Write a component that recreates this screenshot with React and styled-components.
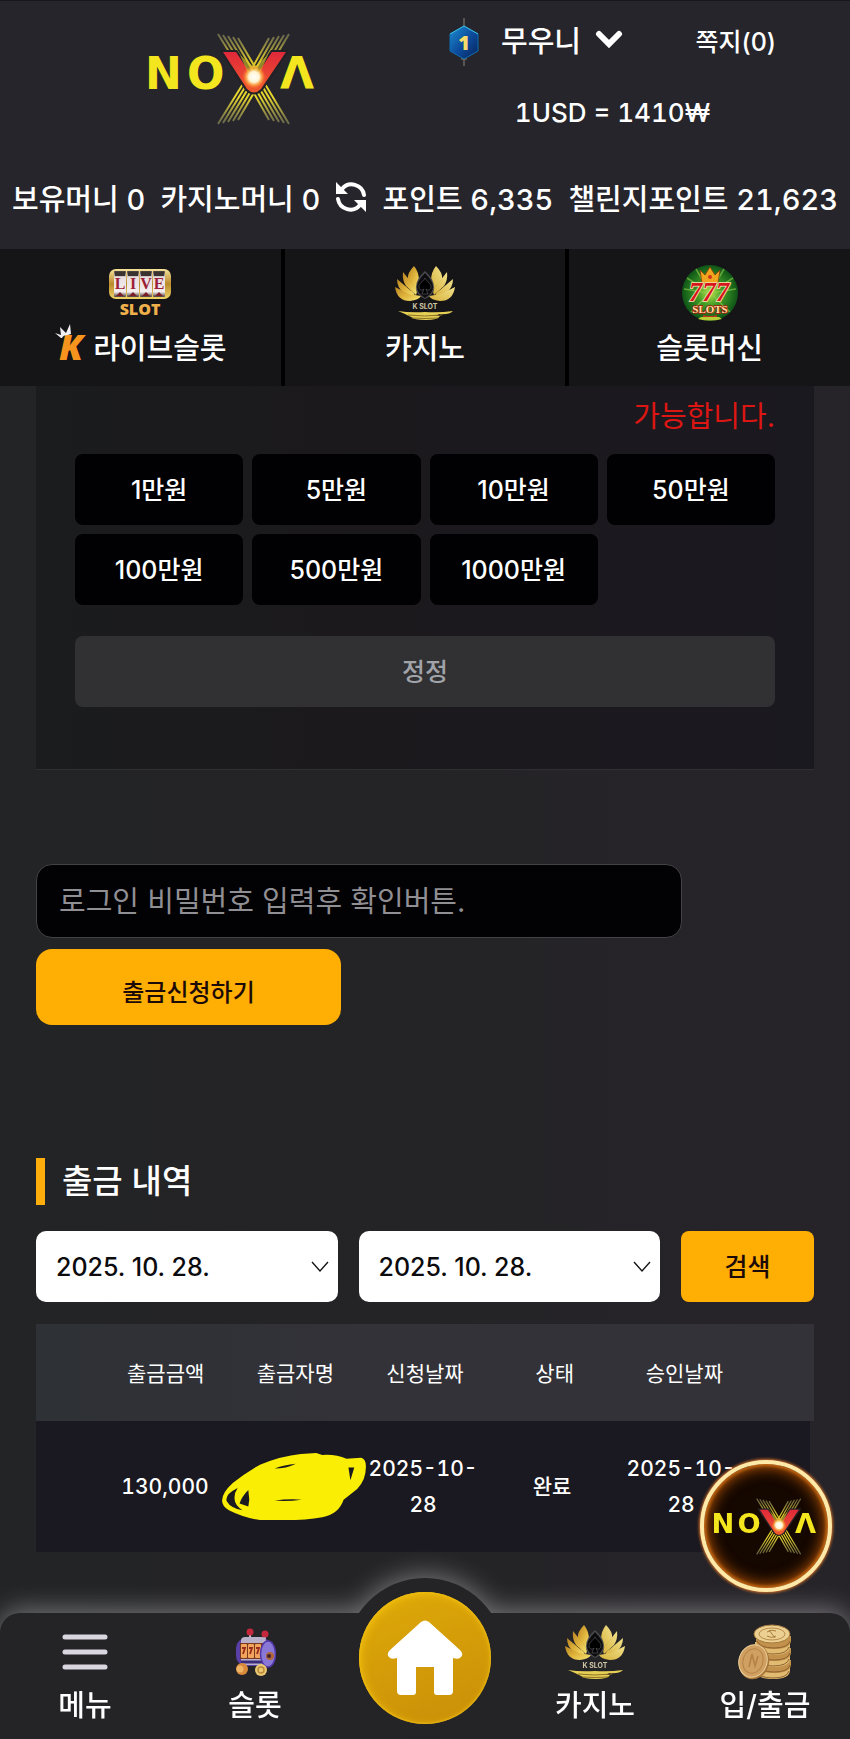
import React,{useState} from 'react'
import styled,{createGlobalStyle} from 'styled-components'

const amounts = ['1만원','5만원','10만원','50만원','100만원','500만원','1000만원']

function Logo({ className }) {
  const beams = [0,1,2,3,4]
  return (
    <svg className={className} viewBox="-8 0 186 92" role="img" aria-label="NOVA">
      <defs>
        <radialGradient id="flare">
          <stop offset="0" stopColor="#fff" />
          <stop offset="0.45" stopColor="#fff3cf" />
          <stop offset="0.7" stopColor="#ffb545" stopOpacity="0.7" />
          <stop offset="1" stopColor="#ff6a2a" stopOpacity="0" />
        </radialGradient>
        <linearGradient id="beam" x1="0" y1="0" x2="0" y2="92" gradientUnits="userSpaceOnUse">
          <stop offset="0" stopColor="#8d8d62" stopOpacity="0.6" />
          <stop offset="0.3" stopColor="#d8c62a" />
          <stop offset="0.7" stopColor="#e6d62c" />
          <stop offset="1" stopColor="#8d8d62" stopOpacity="0.6" />
        </linearGradient>
        <linearGradient id="redV" x1="0" y1="0" x2="0" y2="1">
          <stop offset="0" stopColor="#e0283a" />
          <stop offset="1" stopColor="#ee5a2c" />
        </linearGradient>
      </defs>
      <g fill="#f4e61e" fontFamily="DejaVu Sans" fontWeight="700" fontSize="44">
        <text x="-3" y="56">N</text>
        <text x="39" y="56">O</text>
        <text x="132" y="56">Λ</text>
      </g>
      <g stroke="url(#beam)" strokeWidth="2" fill="none">
        {beams.map((i) => (
          <g key={i}>
            <path d={`M${70 + i * 5} ${1 + i}L${98 + i * 4} 46L${121 + i * 5} ${87 + i}`} />
            <path d={`M${141 - i * 5} ${1 + i}L${114 - i * 4} 46L${90 - i * 5} ${87 + i}`} />
          </g>
        ))}
      </g>
      <path d="M71 17h18l17 25 17-25h19l-27 40q-9 9-18 0z" fill="#222126" />
      <path d="M75 19h13l18 27 18-27h14l-25 37q-7 7-14 0z" fill="url(#redV)" />
      <path d="M92 22l14 12 14-12-9 20h-10z" fill="#d9c52b" opacity="0.6" />
      <circle cx="106" cy="44" r="12" fill="url(#flare)" />
    </svg>
  )
}

function Lotus() {
  return (
    <svg width="62" height="56" viewBox="0 0 62 56" aria-hidden="true">
      <defs>
        <linearGradient id="petal" x1="0" y1="0" x2="1" y2="1">
          <stop offset="0" stopColor="#b98422" />
          <stop offset="0.5" stopColor="#e0b43c" />
          <stop offset="1" stopColor="#f5e676" />
        </linearGradient>
        <linearGradient id="petalR" x1="1" y1="0" x2="0" y2="1">
          <stop offset="0" stopColor="#f0e08a" />
          <stop offset="1" stopColor="#d8b23c" />
        </linearGradient>
      </defs>
      <g fill="url(#petal)">
        <path d="M20 1q-7 7-6 13l9 11q3-3 2-9 0-9-5-15z" />
        <path d="M9 7q-1 8 3 14l10 9q2-4-1-8z" />
        <path d="M3 14q0 9 7 14l11 4q0-4-5-7z" />
        <path d="M1 22q2 14 15 14 9-1 11-5-6-1-12-2z" />
      </g>
      <g fill="url(#petalR)">
        <path d="M42 1q7 7 6 13l-9 11q-3-3-2-9 0-9 5-15z" />
        <path d="M53 7q1 8-3 14l-10 9q-2-4 1-8z" />
        <path d="M59 14q0 9-7 14l-11 4q0-4 5-7z" />
        <path d="M61 22q-2 14-15 14-9-1-11-5 6-1 12-2z" />
      </g>
      <path d="M31 6q9 8 9 16t-9 12q-9-4-9-12t9-16z" fill="#4b4b50" />
      <path d="M31 8q8 8 8 14t-8 11q-8-5-8-11t8-14z" fill="#0c0c0e" />
      <path d="M31 13c2 4 6 5 6 9 0 3-3 4-5 2l2 5h-6l2-5c-2 2-5 1-5-2 0-4 4-5 6-9z" fill="#000" stroke="#55555a" strokeWidth="0.7" />
      <text x="31" y="44" textAnchor="middle" fontFamily="Inter" fontWeight="700" fontSize="7" fill="#cfc5a5">K SLOT</text>
      <path d="M4 46q12 2 27 1 14 1 28-1-4 4-14 3-2 2-9 2h10q-2 4-14 4t-15-3l-6-3z" fill="#e6cf55" />
      <path d="M14 50q16 2 34 0M18 53q13 1 26 0" stroke="#8c7124" fill="none" />
    </svg>
  )
}

function LiveSlot() {
  return (
    <svg width="64" height="56" viewBox="0 -3 64 56" aria-hidden="true">
      <defs>
        <linearGradient id="frame" x1="0" y1="0" x2="0" y2="1">
          <stop offset="0" stopColor="#f6e39a" />
          <stop offset="0.5" stopColor="#b98a2c" />
          <stop offset="1" stopColor="#f1d568" />
        </linearGradient>
        <linearGradient id="reel" x1="0" y1="0" x2="0" y2="1">
          <stop offset="0" stopColor="#3b3633" />
          <stop offset="0.25" stopColor="#e8dfe0" />
          <stop offset="0.8" stopColor="#f4eeee" />
          <stop offset="1" stopColor="#4b3a38" />
        </linearGradient>
      </defs>
      <rect x="1" y="1" width="62" height="30" rx="7" fill="url(#frame)" />
      {['L','I','V','E'].map((letter, i) => (
        <g key={letter}>
          <rect x={6 + i * 13} y="3" width="12" height="26" rx="1" fill="url(#reel)" />
          <path d={`M${7 + i * 13} 4h10v4h-10z`} fill="#3a3330" />
          <text x={12 + i * 13} y="21" textAnchor="middle" fontFamily="Liberation Serif" fontWeight="700" fontSize="16" fill="#9c1f36">{letter}</text>
          <path d={`M${8 + i * 13} 28l4-4 4 4z`} fill="#7a1f28" />
        </g>
      ))}
      <text x="32" y="47" textAnchor="middle" fontFamily="Open Sans" fontWeight="800" fontSize="16" fill="#efb04c">SLOT</text>
    </svg>
  )
}

function KMark() {
  return (
    <svg width="36" height="50" viewBox="-2 -3 36 50" aria-hidden="true">
      <text x="3" y="36" fontFamily="Open Sans" fontWeight="800" fontStyle="italic" fontSize="36" fill="#f7941d">K</text>
      <path d="M5 14L-1 9l6 2-1-8 6 6 4-9 1 10-3 1q-5 0-6 3z" fill="#f2f0f4" />
    </svg>
  )
}

function SevenSlots() {
  return (
    <svg width="58" height="58" viewBox="0 0 58 58" aria-hidden="true">
      <defs>
        <radialGradient id="green">
          <stop offset="0" stopColor="#b9e34a" />
          <stop offset="0.45" stopColor="#3f9a26" />
          <stop offset="1" stopColor="#0e5417" />
        </radialGradient>
      </defs>
      <circle cx="29" cy="29" r="28" fill="url(#green)" />
      <path d="M29 29L6 14M29 29L3 25M29 29L52 14M29 29l26-4M29 29L10 48M29 29l20 19M29 29L15 5M29 29L43 5" stroke="#8fd04a" strokeWidth="1.5" opacity="0.6" />
      <path d="M19 6l5 5 5-8 5 8 5-5-2 13H21z" fill="#f0a51e" stroke="#8a3a0c" strokeWidth="0.8" />
      <circle cx="29" cy="13" r="2" fill="#d3321f" />
      <text x="28" y="37" textAnchor="middle" fill="#d5161c" stroke="#ffe3b0" strokeWidth="1.6" paintOrder="stroke" fontFamily="Liberation Serif" fontWeight="700" fontStyle="italic" fontSize="27">777</text>
      <text x="29" y="49" textAnchor="middle" fontFamily="Liberation Serif" fontWeight="700" fontSize="11" fill="#ffe0a0" stroke="#a3160f" strokeWidth="1.4" paintOrder="stroke">SLOTS</text>
      <path d="M22 52q7 2 14 0" stroke="#b9381b" strokeWidth="2" fill="none" />
      <path d="M17 55q12 3 24 0l-3-2H20z" fill="#b7cf34" />
    </svg>
  )
}

function SlotMachine() {
  return (
    <svg width="42" height="48" viewBox="0 0 42 48" aria-hidden="true">
      <path d="M16 6v8M31 7v8" stroke="#c9b8c4" strokeWidth="2" />
      <circle cx="16" cy="4" r="3.5" fill="#c5283c" />
      <circle cx="31" cy="6" r="3.5" fill="#c5283c" />
      <rect x="2" y="10" width="36" height="28" rx="10" fill="#5a3fa6" />
      <rect x="7" y="9" width="25" height="28" rx="4" fill="#b9b1c9" />
      <rect x="6" y="15" width="23" height="16" fill="#7a3a22" />
      <g fill="#f0a45c">
        <rect x="7" y="16" width="6" height="14" rx="1" />
        <rect x="14" y="16" width="6" height="14" rx="1" />
        <rect x="21" y="16" width="6" height="14" rx="1" />
      </g>
      <path d="M8 20h3l-2 6M15 20h3l-2 6M22 20h3l-2 6" stroke="#9a2b1c" strokeWidth="1.8" fill="none" />
      <path d="M7 34h22" stroke="#3a2c7a" strokeWidth="3" />
      <ellipse cx="34" cy="26" rx="7.5" ry="13" fill="#8a78d6" stroke="#5237a8" strokeWidth="1.5" />
      <circle cx="36" cy="28" r="4" fill="#b0643a" />
      <circle cx="35" cy="28" r="2" fill="#3a2230" />
      <circle cx="8" cy="41" r="6" fill="#d98a3a" />
      <circle cx="6" cy="41" r="3.5" fill="#efb566" />
      <circle cx="27" cy="42" r="6" fill="#ecc873" />
      <circle cx="27" cy="42" r="3" fill="none" stroke="#b98a3a" strokeWidth="1.5" />
    </svg>
  )
}

function Coins() {
  return (
    <svg width="54" height="56" viewBox="0 0 54 56" aria-hidden="true">
      {[46,40,34,28,22,16].map((y, i) => (
        <g key={y}>
          <path d={`M${17 + (i % 2)} ${y - 4}v5q2 8 18 8t17-8v-5z`} fill={i % 2 ? '#c2914c' : '#e2bb72'} />
          <path d={`M${18 + (i % 2)} ${y + 1}q3 7 17 7t16-7`} stroke="#8d6230" fill="none" />
        </g>
      ))}
      <ellipse cx="34" cy="10" rx="18" ry="9" fill="#ecd092" stroke="#a67c3d" />
      <ellipse cx="34" cy="10" rx="13" ry="6" fill="none" stroke="#b78d4c" />
      <path d="M29 8q4-3 9-1M29 12q5 3 9 0M31 6l6 8" stroke="#a67c3d" fill="none" />
      <ellipse cx="16" cy="38" rx="15" ry="17.5" transform="rotate(18 16 38)" fill="#a87538" />
      <ellipse cx="15" cy="37" rx="14" ry="16.5" transform="rotate(18 15 37)" fill="#d0a062" stroke="#edcf98" />
      <ellipse cx="15" cy="37" rx="10" ry="12.5" transform="rotate(18 15 37)" fill="none" stroke="#b58144" />
      <path d="M11 43l3-13 3 12 3-10" stroke="#b58144" strokeWidth="1.6" fill="none" />
    </svg>
  )
}

function LevelBadge() {
  return (
    <svg width="30" height="50" viewBox="0 0 30 50" aria-hidden="true">
      <defs>
        <linearGradient id="hex" x1="0" y1="0" x2="1" y2="1">
          <stop offset="0" stopColor="#1c8fd0" />
          <stop offset="0.5" stopColor="#0d4d9e" />
          <stop offset="1" stopColor="#06225a" />
        </linearGradient>
      </defs>
      <path d="M15 1v9M15 41v8M12 42h6" stroke="#8c8470" />
      <path d="M15 9l14 8v17l-14 8-14-8V17z" fill="url(#hex)" stroke="#0f6fb4" />
      <path d="M1 17l14-8 14 8" stroke="#3fc1e6" fill="none" />
      <text x="15" y="33" textAnchor="middle" fontFamily="Open Sans" fontWeight="800" fontSize="20" fill="#f6dc6a">1</text>
    </svg>
  )
}

function Home() {
  return (
    <svg width="76" height="76" viewBox="0 0 76 76" aria-hidden="true">
      <path d="M34 2q4-3 8 0l31 28q4 4 1 7-2 3-8 1v33q0 4-4 4H50q-3 0-3-3V47H29v25q0 3-3 3H14q-4 0-4-4V38q-6 2-8-1-3-3 1-7z" fill="#fff" />
    </svg>
  )
}

function Scribble() {
  return (
    <Marker width="148" height="70" viewBox="0 0 150 72" aria-hidden="true">
      <path d="M1 50Q1 42 12 32 24 22 40 13 62 4 82 2l16-1 6 2q14-1 25 4l15-1q5 1 5 9 0 14-9 23l-14 11q-5 15-22 18-16 3-38 3H40Q24 68 8 60 1 56 1 50z" fill="#faee05" />
      <path d="M17 37q-14 7-11 14 4 7 16 9-8-6-8-11-1-6 3-12zM28 39q-7 7-9 14l9 3 1-7zM55 17q10-4 22-5-10 5-22 5zM55 50q14-2 28-1-14 2-28 1zM131 16h6l-4 13z" fill="#1b1a1f" />
    </Marker>
  )
}

export default function App() {
  const [password,setPassword]=useState('')
  return (
    <>
      <GlobalStyle />
      <Page>
        <Header>
          <HeaderTop>
            <LogoLink href="#home"><HeaderLogo /></LogoLink>
            <UserArea>
              <UserRow>
                <LevelBadge />
                <UserButton type="button">
                  무우니
                  <svg width="28" height="18" viewBox="0 0 28 18" aria-hidden="true">
                    <path d="M4 4l10 10L24 4" stroke="#fff" strokeWidth="6" strokeLinecap="round" fill="none" />
                  </svg>
                </UserButton>
                <NoteLink href="#note">쪽지(0)</NoteLink>
              </UserRow>
              <Rate>1USD = 1410₩</Rate>
            </UserArea>
          </HeaderTop>
          <Balance>
            <span>보유머니 0</span>
            <span>카지노머니 0</span>
            <RefreshButton type="button" aria-label="새로고침">
              <svg width="32" height="32" viewBox="0 0 32 32" aria-hidden="true">
                <path d="M7 8a12.5 12.5 0 0 1 22 6M25 24a12.5 12.5 0 0 1-22-6" stroke="#fff" strokeWidth="4" strokeLinecap="round" fill="none" />
                <path d="M1 1v12h12zM31 31V19H19z" fill="#fff" />
              </svg>
            </RefreshButton>
            <span>포인트 6,335</span>
            <span>챌린지포인트 21,623</span>
          </Balance>
        </Header>

        <GameNav>
          <GameLink href="#live">
            <GameIcon><LiveSlot /></GameIcon>
            <GameLabel><KMark />라이브슬롯</GameLabel>
          </GameLink>
          <GameLink href="#casino">
            <GameIcon><Lotus /></GameIcon>
            <GameLabel>카지노</GameLabel>
          </GameLink>
          <GameLink href="#slot">
            <GameIcon><SevenSlots /></GameIcon>
            <GameLabel>슬롯머신</GameLabel>
          </GameLink>
        </GameNav>

        <Content>
          <Panel>
            <Notice>가능합니다.</Notice>
            <AmountGrid>
              {amounts.map((amount) => (
                <AmountButton type="button" key={amount}>{amount}</AmountButton>
              ))}
            </AmountGrid>
            <ResetButton type="button">정정</ResetButton>
          </Panel>

          <WithdrawForm onSubmit={(e)=>e.preventDefault()}>
            <PasswordInput
              type="password"
              aria-label="로그인 비밀번호"
              placeholder="로그인 비밀번호 입력후 확인버튼."
              value={password}
              onChange={(e)=>setPassword(e.target.value)}
            />
            <SubmitButton type="submit">출금신청하기</SubmitButton>
          </WithdrawForm>

          <Title>출금 내역</Title>
          <SearchRow>
            {['시작일','종료일'].map((name) => (
              <DateBox key={name}>
                <DateSelect aria-label={name}>
                  <option>2025. 10. 28.</option>
                </DateSelect>
                <DateArrow width="18" height="11" viewBox="0 0 18 11" aria-hidden="true">
                  <path d="M1 1l8 9 8-9" stroke="#111" strokeWidth="1.3" fill="none" />
                </DateArrow>
              </DateBox>
            ))}
            <SearchButton type="button">검색</SearchButton>
          </SearchRow>

          <Table>
            <TableHead>
              <Row $height={97}>
                <Th>출금금액</Th>
                <Th>출금자명</Th>
                <Th>신청날짜</Th>
                <Th>상태</Th>
                <Th>승인날짜</Th>
              </Row>
            </TableHead>
            <TableBody>
              <Row $height={131}>
                <Td>130,000</Td>
                <Td><Scribble /></Td>
                <Td>2025-10-28</Td>
                <Td>완료</Td>
                <Td>2025-10-28</Td>
              </Row>
            </TableBody>
          </Table>
        </Content>

        <BottomNav>
          <TabLink href="#menu">
            <TabIcon>
              <svg width="46" height="38" viewBox="0 0 46 38" aria-hidden="true">
                <path d="M3 4h40M3 19h40M3 34h40" stroke="#d9d6df" strokeWidth="5" strokeLinecap="round" />
              </svg>
            </TabIcon>
            메뉴
          </TabLink>
          <TabLink href="#slot">
            <TabIcon><SlotMachine /></TabIcon>
            슬롯
          </TabLink>
          <HomeCell>
            <HomeRing>
              <HomeLink href="#home" aria-label="홈"><Home /></HomeLink>
            </HomeRing>
          </HomeCell>
          <TabLink href="#casino">
            <TabIcon><Lotus /></TabIcon>
            카지노
          </TabLink>
          <TabLink href="#cash">
            <TabIcon><Coins /></TabIcon>
            입/출금
          </TabLink>
        </BottomNav>
        <FloatButton type="button" aria-label="NOVA"><FloatLogo /></FloatButton>
      </Page>
    </>
  )
}

const GlobalStyle = createGlobalStyle`
*{
    box-sizing: border-box;
}
body{
    margin: 0;
    background: #242427;
}
body, button, input, select{
    font-family: Inter, "Noto Sans CJK KR", sans-serif;
    font-weight: 500;
}
button{
    border: 0;
    padding: 0;
    cursor: pointer;
}
a{
    color: inherit;
    text-decoration: none;
}
`
const Page = styled.div`
    min-height: 100vh;
    display: flex;
    flex-direction: column;
    color: #fff;
    background: linear-gradient(90deg, #232425, #242326 50%, #262429);
    overflow-x: hidden;
`
const Header = styled.header`
    background: #26252b;
    border-top: 1px solid #17161b;
`
const HeaderTop = styled.div`
    display: grid;
    grid-template-columns: 1fr 1fr;
    height: 156px;
`
const LogoLink = styled.a`
    display: flex;
    justify-content: center;
    padding: 32px 0 0 40px;
`
const HeaderLogo = styled(Logo)`
    width: 186px;
    height: 92px;
`
const UserArea = styled.div`
    padding: 16px 74px 0 24px;
`
const UserRow = styled.div`
    display: flex;
    align-items: center;
    height: 50px;
`
const UserButton = styled.button`
    display: flex;
    align-items: center;
    gap: 14px;
    margin: 0 auto 0 22px;
    padding-bottom: 6px;
    background: none;
    color: #fff;
    font-size: 29px;
`
const NoteLink = styled.a`
    padding-bottom: 4px;
    font-size: 25px;
`
const Rate = styled.div`
    margin-top: 28px;
    text-align: center;
    font-size: 26px;
    line-height: 36px;
    font-variant-numeric: tabular-nums;
`
const Balance = styled.div`
    display: flex;
    align-items: center;
    justify-content: space-between;
    height: 92px;
    padding: 0 12px 12px;
    font-size: 29px;
    white-space: nowrap;
    font-variant-numeric: tabular-nums;
`
const RefreshButton = styled.button`
    display: flex;
    background: none;
`
const GameNav = styled.nav`
    display: grid;
    grid-template-columns: repeat(3, 1fr);
    gap: 4px;
    background: #000;
`
const GameLink = styled.a`
    display: flex;
    flex-direction: column;
    align-items: center;
    height: 137px;
    padding-top: 14px;
    background: #151417;
`
const GameIcon = styled.span`
    display: flex;
    align-items: center;
    height: 60px;
`
const GameLabel = styled.span`
    display: flex;
    align-items: center;
    gap: 3px;
    height: 46px;
    font-size: 29px;
`
const Content = styled.main`
    padding: 0 36px;
`
const Panel = styled.section`
    padding: 9px 39px 62px;
    background: linear-gradient(90deg, #1b1c1d, #1b191c 40%, #1b1920);
    border-bottom: 1px solid #303034;
`
const Notice = styled.p`
    margin: 0;
    text-align: right;
    font-size: 29px;
    line-height: 44px;
    font-weight: 400;
    color: #dc1612;
`
const AmountGrid = styled.div`
    display: grid;
    grid-template-columns: repeat(4, 1fr);
    gap: 9px;
    margin-top: 15px;
`
const AmountButton = styled.button`
    height: 71px;
    padding-bottom: 4px;
    border-radius: 8px;
    background: #010002;
    color: #fff;
    font-size: 25px;
`
const ResetButton = styled(AmountButton)`
    width: 100%;
    margin-top: 31px;
    background: #313033;
    color: #a0a3a8;
`
const WithdrawForm = styled.form`
    display: flex;
    flex-direction: column;
    align-items: flex-start;
    gap: 11px;
    margin-top: 94px;
`
const PasswordInput = styled.input`
    width: 83%;
    height: 74px;
    padding: 0 22px;
    border: 1px solid #434246;
    border-radius: 16px;
    background: #020103;
    color: #fff;
    font-size: 29px;
    font-weight: 400;
    &::placeholder{
        color: #908f93;
        opacity: 1;
    }
`
const SubmitButton = styled.button`
    width: 305px;
    height: 76px;
    padding-top: 6px;
    border-radius: 16px;
    background: #ffae03;
    color: #1c0a08;
    font-size: 24px;
`
const Title = styled.h2`
    margin: 133px 0 26px;
    padding-left: 17px;
    border-left: 9px solid #ffae0c;
    font-size: 33px;
    line-height: 47px;
    font-weight: 500;
`
const SearchRow = styled.div`
    display: flex;
    gap: 21px;
    height: 71px;
`
const DateBox = styled.div`
    position: relative;
    flex: 1;
`
const DateSelect = styled.select`
    appearance: none;
    width: 100%;
    height: 100%;
    padding: 0 40px 0 20px;
    border: 0;
    border-radius: 10px;
    background: #fff;
    color: #0b0b0d;
    font-size: 25px;
`
const DateArrow = styled.svg`
    position: absolute;
    right: 9px;
    top: 30px;
    pointer-events: none;
`
const SearchButton = styled.button`
    width: 133px;
    padding-bottom: 4px;
    border-radius: 8px;
    background: #ffae03;
    color: #1c0a08;
    font-size: 25px;
`
const Table = styled.table`
    display: block;
    margin-top: 22px;
`
const TableHead = styled.thead`
    display: block;
    background: linear-gradient(90deg, #2e3136, #333238 50%);
`
const TableBody = styled.tbody`
    display: block;
    margin-right: 4px;
    background: #1a1820;
`
const Row = styled.tr`
    display: grid;
    grid-template-columns: 1fr repeat(5, 2fr) 1fr;
    align-items: center;
    height: ${(p) => p.$height}px;
    & > :first-child{
        grid-column: 2;
    }
`
const Th = styled.th`
    padding: 0 0 2px;
    font-size: 21px;
    font-weight: 400;
`
const Td = styled.td`
    position: relative;
    padding: 0 10px;
    text-align: center;
    font-size: 21px;
    line-height: 36px;
    font-variant-numeric: tabular-nums;
`
const Marker = styled.svg`
    position: absolute;
    left: 50%;
    top: 50%;
    transform: translate(-50%, -50%);
`
const BottomNav = styled.nav`
    display: grid;
    grid-template-columns: repeat(5, 1fr);
    height: 126px;
    margin-top: auto;
    border-radius: 20px 20px 0 0;
    background: #242427;
    filter: drop-shadow(0 -3px 13px rgba(255, 255, 255, 0.38));
`
const TabLink = styled.a`
    display: flex;
    flex-direction: column;
    align-items: center;
    padding-top: 11px;
    font-size: 29px;
    line-height: 52px;
`
const TabIcon = styled.span`
    display: flex;
    align-items: center;
    height: 56px;
`
const HomeCell = styled.div`
    display: flex;
    justify-content: center;
`
const HomeRing = styled.div`
    display: flex;
    flex: none;
    align-items: center;
    justify-content: center;
    width: 160px;
    height: 160px;
    margin-top: -35px;
    border-radius: 50%;
    background: #242427;
`
const HomeLink = styled.a`
    display: flex;
    align-items: center;
    justify-content: center;
    width: 132px;
    height: 132px;
    border-radius: 50%;
    background: linear-gradient(160deg, #deaa08, #c98e09);
    box-shadow: inset 2px 2px 8px #f0bd0c, inset 0 0 3px #ffd21e;
`
const FloatButton = styled.button`
    position: fixed;
    right: 18px;
    bottom: 147px;
    display: flex;
    align-items: center;
    justify-content: center;
    width: 132px;
    height: 132px;
    border: 4px solid #ffe9a8;
    border-radius: 50%;
    background: #150800;
    box-shadow: inset 0 0 14px 4px #a84e05, inset 0 0 3px 2px #ff9a2e, 0 0 3px 1px #d4722a;
`
const FloatLogo = styled(Logo)`
    width: 116px;
    height: 57px;
    flex: none;
`
